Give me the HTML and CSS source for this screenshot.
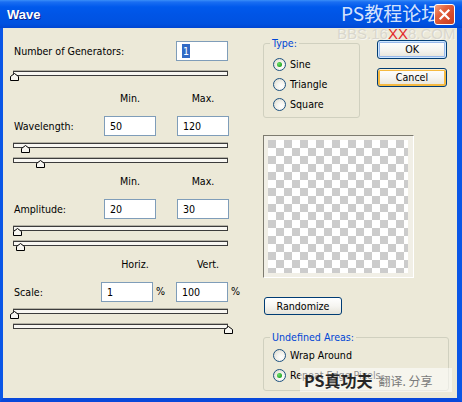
FILE: index.html
```html
<!DOCTYPE html>
<html>
<head>
<meta charset="utf-8">
<title>Wave</title>
<link rel="stylesheet" href="styles.css">
</head>
<body>
<div class="window">
  <div class="titlebar">
    <span class="title">Wave</span>
    <button class="close" aria-label="Close">
      <svg width="13" height="13" viewBox="0 0 13 13"><path d="M2.5 2.5L10.5 10.5M10.5 2.5L2.5 10.5" stroke="#fff" stroke-width="2.2" stroke-linecap="square"/></svg>
    </button>
  </div>
  <div class="frame">
    <div class="left">
      <div class="row row-gen">
        <span class="lbl">Number of Generators:</span>
        <div class="field"><span class="sel">1</span></div>
      </div>
      <div class="slider"><div class="track"></div><svg class="thumb" style="left:-3px" viewBox="0 0 9 8"><path d="M0.5 7.5V3.5L4.5 0.5L8.5 3.5V7.5Z" fill="#F7F6F1" stroke="#000"/></svg></div>

      <div class="head"><span>Min.</span><span>Max.</span></div>
      <div class="row">
        <span class="lbl">Wavelength:</span>
        <div class="field">50</div>
        <div class="field">120</div>
      </div>
      <div class="slider"><div class="track"></div><svg class="thumb" style="left:8px" viewBox="0 0 9 8"><path d="M0.5 7.5V3.5L4.5 0.5L8.5 3.5V7.5Z" fill="#F7F6F1" stroke="#000"/></svg></div>
      <div class="slider"><div class="track"></div><svg class="thumb" style="left:23px" viewBox="0 0 9 8"><path d="M0.5 7.5V3.5L4.5 0.5L8.5 3.5V7.5Z" fill="#F7F6F1" stroke="#000"/></svg></div>

      <div class="head"><span>Min.</span><span>Max.</span></div>
      <div class="row">
        <span class="lbl">Amplitude:</span>
        <div class="field">20</div>
        <div class="field">30</div>
      </div>
      <div class="slider"><div class="track"></div><svg class="thumb" style="left:0px" viewBox="0 0 9 8"><path d="M0.5 7.5V3.5L4.5 0.5L8.5 3.5V7.5Z" fill="#F7F6F1" stroke="#000"/></svg></div>
      <div class="slider"><div class="track"></div><svg class="thumb" style="left:3px" viewBox="0 0 9 8"><path d="M0.5 7.5V3.5L4.5 0.5L8.5 3.5V7.5Z" fill="#F7F6F1" stroke="#000"/></svg></div>

      <div class="head head-scale"><span>Horiz.</span><span>Vert.</span></div>
      <div class="row row-scale">
        <span class="lbl">Scale:</span>
        <div class="field">1</div>
        <span class="pct">%</span>
        <div class="field">100</div>
        <span class="pct">%</span>
      </div>
      <div class="slider"><div class="track"></div><svg class="thumb" style="left:-3px" viewBox="0 0 9 8"><path d="M0.5 7.5V3.5L4.5 0.5L8.5 3.5V7.5Z" fill="#F7F6F1" stroke="#000"/></svg></div>
      <div class="slider"><div class="track"></div><svg class="thumb" style="left:211px" viewBox="0 0 9 8"><path d="M0.5 7.5V3.5L4.5 0.5L8.5 3.5V7.5Z" fill="#F7F6F1" stroke="#000"/></svg></div>
    </div>

    <div class="right">
      <div class="top">
        <fieldset class="group type">
          <legend>Type:</legend>
          <div class="radio"><span class="dot on"></span>Sine</div>
          <div class="radio"><span class="dot"></span>Triangle</div>
          <div class="radio"><span class="dot"></span>Square</div>
        </fieldset>
        <div class="buttons">
          <div class="btn btn-default">OK</div>
          <div class="btn btn-hover">Cancel</div>
        </div>
      </div>
      <div class="preview"><div class="checker"></div></div>
      <div class="btn btn-rand">Randomize</div>
      <fieldset class="group undef">
        <legend>Undefined Areas:</legend>
        <div class="radio"><span class="dot"></span>Wrap Around</div>
        <div class="radio"><span class="dot on"></span>Repeat Edge Pixels</div>
      </fieldset>
    </div>
  </div>

  <div class="wm-top">PS教程论坛</div>
  <div class="wm-site">BBS.16<span class="red">XX</span>8.COM</div>
  <div class="wm-bottom"><b>PS真功夫</b><span>翻译. 分享</span></div>
</div>
</body>
</html>
```

FILE: styles.css
```css
* { box-sizing: border-box; }
html, body { margin: 0; padding: 0; }
body {
  width: 462px;
  height: 402px;
  overflow: hidden;
  font-family: "DejaVu Sans Condensed", "DejaVu Sans", "Liberation Sans", sans-serif;
  font-stretch: condensed;
  font-size: 10.6px;
  color: #000;
}
.window {
  position: relative;
  width: 462px;
  height: 402px;
  display: flex;
  flex-direction: column;
  background: #0842D4;
}
.titlebar {
  height: 28px;
  flex: none;
  display: flex;
  align-items: center;
  padding: 0 7px;
  background: linear-gradient(#3A8FF8 0, #1A6EF2 2px, #0059EC 7px, #0055E6 50%, #0051E0 85%, #0046D2 100%);
}
.title {
  font-family: "Liberation Sans", sans-serif;
  font-stretch: normal;
  font-weight: bold;
  font-size: 13px;
  color: #fff;
  text-shadow: 1px 1px 0 #0A1E8C;
  margin-top: 1px;
}
.close {
  position: relative;
  z-index: 2;
  margin-left: auto;
  width: 21px;
  height: 21px;
  padding: 0;
  border: 1px solid #fff;
  border-radius: 3px;
  background: linear-gradient(135deg, #F3A384 0%, #E2633F 35%, #D5492B 70%, #C7401F 100%);
  display: flex;
  align-items: center;
  justify-content: center;
}
.frame {
  flex: 1;
  display: flex;
  border-left: 3px solid #0A56E6;
  border-right: 5px solid #0A56E6;
  border-bottom: 4px solid #0848DA;
  background: #ECE9D8;
}

/* left column */
.left {
  width: 260px;
  padding: 13px 0 0 10px;
  display: flex;
  flex-direction: column;
}
.row {
  display: flex;
  align-items: center;
  height: 20px;
}
.lbl { width: 91px; padding-left: 1px; }
.row-gen .lbl { width: 163px; }
.row-scale .lbl { width: 88px; }
.field {
  width: 52px;
  height: 20px;
  border: 1px solid #7F9DB9;
  background: #fff;
  padding-left: 5px;
  line-height: 18px;
}
.field + .field { margin-left: 21px; }
.pct { width: 23px; padding-left: 3px; margin-top: -3px; }
.sel {
  display: inline-block;
  background: #316AC5;
  color: #fff;
  padding: 0 1px;
  line-height: 14px;
}
.slider {
  position: relative;
  width: 215px;
  height: 10px;
}
.track {
  height: 5px;
  border: 1px solid #3C3C3C;
  background: #F8F7F2;
  box-shadow: 0 -1px 0 #B5B3A6;
}
.thumb {
  position: absolute;
  top: 2px;
  width: 9px;
  height: 8px;
}
.row + .slider { margin-top: 7px; }
.row-gen + .slider { margin-top: 10px; }
.slider + .slider { margin-top: 5px; }
.slider + .head { margin-top: 7px; }
.row-gen + .slider + .head { margin-top: 11px; }
.head + .row { margin-top: 11px; }
.head {
  display: flex;
  height: 13px;
  line-height: 13px;
  padding-left: 91px;
}
.head span { width: 52px; text-align: center; }
.head span + span { margin-left: 21px; }
.head-scale { padding-left: 96px; }

/* right column */
.right {
  width: 194px;
  padding-top: 9px;
  display: flex;
  flex-direction: column;
  align-items: flex-start;
}
.top { display: flex; }
.group {
  margin: 0;
  min-width: 0;
  border: 1px solid #D0D0BF;
  border-radius: 3px;
  padding: 0 4px 3px 6px;
}
.group legend {
  padding: 0 2px;
  color: #0046D5;
  line-height: 13px;
}
.type { width: 97px; padding-top: 4px; }
.undef { margin-top: 16px; width: 186px; padding-top: 1px; padding-bottom: 5px; }
.radio {
  display: flex;
  align-items: center;
  gap: 4px;
  height: 20px;
  margin-left: 3px;
  white-space: nowrap;
}
.dot {
  width: 13px;
  height: 13px;
  flex: none;
  border-radius: 50%;
  border: 1px solid #1C5180;
  background: radial-gradient(circle at 65% 65%, #FFFFFF 0, #F4F3EE 40%, #D8D5C6 100%);
  display: flex;
  align-items: center;
  justify-content: center;
}
.dot.on::after {
  content: "";
  width: 5px;
  height: 5px;
  border-radius: 50%;
  background: radial-gradient(circle at 35% 35%, #6BE06B, #21A121 75%);
}
.buttons {
  margin-left: 17px;
  padding-top: 3px;
  display: flex;
  flex-direction: column;
  gap: 9px;
}
.btn {
  width: 70px;
  height: 19px;
  border: 1px solid #003C74;
  border-radius: 3px;
  background: linear-gradient(#FFFFFF 0, #F6F5F1 50%, #E5E3D9 100%);
  line-height: 17px;
  text-align: center;
}
.btn-default { box-shadow: inset 0 0 0 1px #CEE7FF, inset 0 0 0 2px #98B8EA; }
.btn-hover { box-shadow: inset 0 1px 0 #FFF0CF, inset 0 0 0 2px #F5B940; }
.btn-rand {
  margin-top: 19px;
  margin-left: 1px;
  width: 78px;
  height: 18px;
  line-height: 16px;
}
.preview {
  margin-top: 17px;
  width: 151px;
  height: 143px;
  border: 1px solid;
  border-color: #7D7B6F #FFFFFF #FFFFFF #7D7B6F;
  background: #F1EFE6;
  padding: 4px 5px 4px 4px;
}
.checker {
  width: 100%;
  height: 100%;
  background-color: #fff;
  background-image: conic-gradient(#fff 25%, #CCCCCC 0 50%, #fff 0 75%, #CCCCCC 0);
  background-size: 16px 16px;
}

/* watermarks */
.wm-top {
  position: absolute;
  z-index: 1;
  left: 341px;
  top: 1px;
  font-family: "Noto Sans CJK SC", sans-serif;
  font-stretch: normal;
  font-size: 19px;
  line-height: 24px;
  color: rgba(240, 246, 255, 0.9);
}
.wm-site {
  position: absolute;
  left: 337px;
  top: 26px;
  font-family: "Liberation Sans", sans-serif;
  font-stretch: normal;
  font-size: 15px;
  line-height: 16px;
  color: #D9D7CD;
  text-shadow: 1px 1px 0 #F6F5F0;
}
.wm-site .red { color: #E2282A; text-shadow: none; }
.wm-bottom {
  position: absolute;
  left: 300px;
  top: 368px;
  width: 152px;
  height: 24px;
  background: rgba(255, 255, 255, 0.55);
  display: flex;
  align-items: center;
  gap: 6px;
  padding-left: 4px;
}
.wm-bottom b {
  font-family: "Noto Sans CJK SC", sans-serif;
  font-stretch: normal;
  font-size: 16px;
  color: #262626;
}
.wm-bottom span {
  font-family: "Noto Sans CJK SC", sans-serif;
  font-stretch: normal;
  font-size: 12px;
  color: #7A7A7A;
}
```
